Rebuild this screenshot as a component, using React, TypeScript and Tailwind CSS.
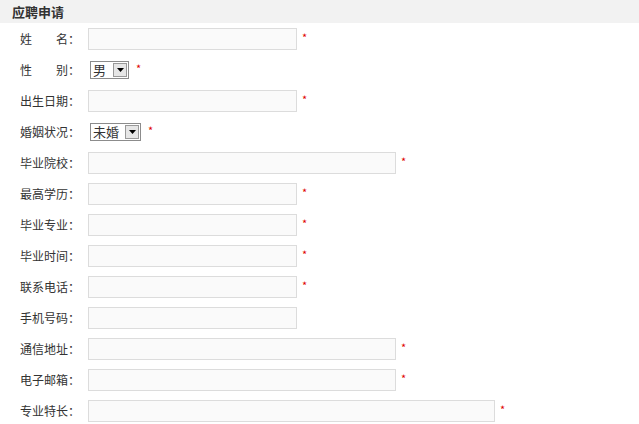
type Field = {
  label: string
  kind: "input" | "select"
  width?: string
  value?: string
  selectWidth?: string
  required: boolean
}

const fields: Field[] = [
  { label: "姓　　名：", kind: "input", width: "w-[209px]", required: true },
  { label: "性　　别：", kind: "select", value: "男", selectWidth: "w-[39px]", required: true },
  { label: "出生日期：", kind: "input", width: "w-[209px]", required: true },
  { label: "婚姻状况：", kind: "select", value: "未婚", selectWidth: "w-[51px]", required: true },
  { label: "毕业院校：", kind: "input", width: "w-[308px]", required: true },
  { label: "最高学历：", kind: "input", width: "w-[209px]", required: true },
  { label: "毕业专业：", kind: "input", width: "w-[209px]", required: true },
  { label: "毕业时间：", kind: "input", width: "w-[209px]", required: true },
  { label: "联系电话：", kind: "input", width: "w-[209px]", required: true },
  { label: "手机号码：", kind: "input", width: "w-[209px]", required: false },
  { label: "通信地址：", kind: "input", width: "w-[308px]", required: true },
  { label: "电子邮箱：", kind: "input", width: "w-[308px]", required: true },
  { label: "专业特长：", kind: "input", width: "w-[407px]", required: true },
]

// old-style select box, drawn by hand so it looks the same everywhere
function FakeSelect({ value, width }: { value: string; width: string }) {
  return (
    <div className={`flex h-[18px] ${width} items-stretch border border-[#8c8c8c] bg-white`}>
      <span className="flex-1 pl-[2px] text-[13px] leading-[16px] text-[#333]">{value}</span>
      <span className="m-[1px] flex w-[14px] items-center justify-center border border-[#999] bg-[#e6e6e6]">
        <svg width="7" height="4" viewBox="0 0 7 4">
          <path d="M0 0h7L3.5 4z" fill="#000" />
        </svg>
      </span>
    </div>
  )
}

export default function App() {
  return (
    <div className="h-[424px] w-[639px] bg-white font-['Noto_Sans_CJK_SC',sans-serif] text-[12px] text-[#333]">
      <div className="h-[23px] bg-[#f2f2f2] pl-3 text-[13px] font-bold leading-[23px] text-[#333]">
        应聘申请
      </div>
      <div className="flex flex-col gap-[9px] pt-[5px]">
        {fields.map((f) => (
          <div key={f.label} className="flex h-[22px] items-center">
            <span className="w-[88px] whitespace-nowrap pl-[20px] leading-[22px]">{f.label}</span>
            {f.kind === "input" ? (
              <input
                type="text"
                className={`h-[22px] ${f.width} border border-[#dcdcdc] bg-[#fafafa] outline-none`}
              />
            ) : (
              <span className="ml-[2px]">
                <FakeSelect value={f.value ?? ""} width={f.selectWidth ?? ""} />
              </span>
            )}
            {f.required && (
              <span
                className={`${f.kind === "input" ? "ml-[5px]" : "ml-[7px]"} self-start pt-[2px] text-[11px] leading-[14px] text-[#e00000]`}
              >
                *
              </span>
            )}
          </div>
        ))}
      </div>
    </div>
  )
}
